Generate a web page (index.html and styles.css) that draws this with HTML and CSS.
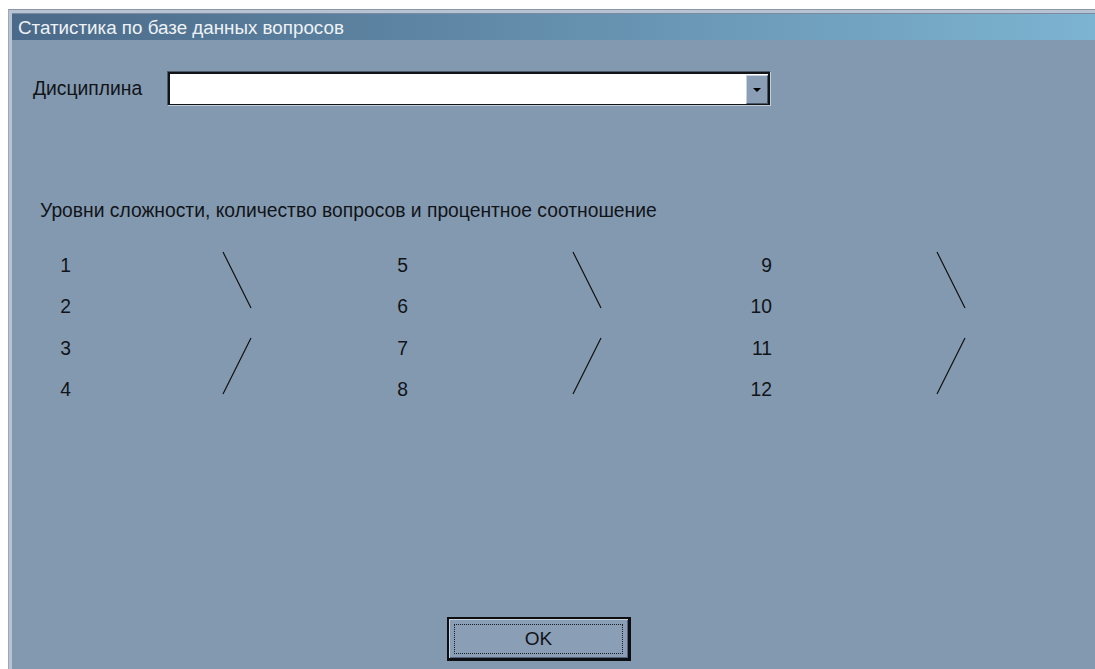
FILE: index.html
```html
<!DOCTYPE html>
<html lang="ru">
<head>
<meta charset="utf-8">
<title>Статистика по базе данных вопросов</title>
<link rel="stylesheet" href="styles.css">
</head>
<body>
<div class="window">
  <div class="frame">
    <div class="titlebar">Статистика по базе данных вопросов</div>
    <div class="client">
      <div class="field-row">
        <span class="label">Дисциплина</span>
        <div class="combo">
          <div class="combo-inner">
            <div class="combo-text"></div>
            <div class="combo-btn">
              <svg width="8" height="4" viewBox="0 0 8 4"><path d="M0 0h8L4 4z" fill="#000"/></svg>
            </div>
          </div>
        </div>
      </div>

      <div class="heading">Уровни сложности, количество вопросов и процентное соотношение</div>

      <div class="levels">
        <div class="group group-first">
          <div class="nums"><span>1</span><span>2</span><span>3</span><span>4</span></div>
          <svg class="brace" width="30" height="165" viewBox="0 0 30 165"><path d="M1 7L29 63M29 93L1 149" stroke="#111" stroke-width="1.2" fill="none"/></svg>
        </div>
        <div class="group">
          <div class="nums"><span>5</span><span>6</span><span>7</span><span>8</span></div>
          <svg class="brace" width="30" height="165" viewBox="0 0 30 165"><path d="M1 7L29 63M29 93L1 149" stroke="#111" stroke-width="1.2" fill="none"/></svg>
        </div>
        <div class="group">
          <div class="nums"><span>9</span><span>10</span><span>11</span><span>12</span></div>
          <svg class="brace" width="30" height="165" viewBox="0 0 30 165"><path d="M1 7L29 63M29 93L1 149" stroke="#111" stroke-width="1.2" fill="none"/></svg>
        </div>
      </div>

      <div class="actions">
        <button class="btn" type="button"><span class="focus">OK</span></button>
      </div>
    </div>
  </div>
</div>
</body>
</html>
```

FILE: styles.css
```css
html, body {
  margin: 0;
  padding: 0;
  background: #ffffff;
  overflow: hidden;
}

body {
  font-family: "Liberation Sans", Arial, sans-serif;
  font-size: 19.3px;
  color: #111418;
}

.window {
  margin: 9px 0 0 8px;
  border-top: 1px solid #8a97a9;
  border-left: 1px solid #9aa8ba;
  height: 660px;
  box-sizing: border-box;
  overflow: hidden;
}

.frame {
  border-top: 3px solid #b7c3d2;
  border-left: 3px solid #b7c3d2;
  height: 100%;
  box-sizing: border-box;
  background: #8399b0;
}

.titlebar {
  height: 27px;
  line-height: 27px;
  padding-left: 6px;
  color: #eef2f6;
  background: linear-gradient(to right, #4b6988, #7db4d1);
  font-size: 18.8px;
  border-top: 1px solid #7a8aa0;
  box-sizing: border-box;
}

.client {
  display: flex;
  flex-direction: column;
  padding-top: 31px;
}

.field-row {
  display: flex;
  align-items: center;
  height: 35px;
}

.label {
  width: 155px;
  padding-left: 21px;
  box-sizing: border-box;
}

.combo {
  width: 604px;
  height: 35px;
  box-sizing: border-box;
  border: 1px solid;
  border-color: #4e5a68 #c4ced9 #c4ced9 #4e5a68;
}

.combo-inner {
  display: flex;
  height: 100%;
  box-sizing: border-box;
  border: 2px solid #101418;
  border-bottom-width: 1px;
  background: #ffffff;
}

.combo-text {
  flex: 1;
}

.combo-btn {
  width: 22px;
  margin: 1px 0 0;
  display: flex;
  align-items: center;
  justify-content: center;
  background: #8a9fb6;
  box-sizing: border-box;
  border: 1px solid;
  border-color: #c7d2de #4a5664 #4a5664 #c7d2de;
}

.heading {
  margin-top: 94px;
  padding-left: 28px;
  line-height: 22px;
}

.levels {
  margin-top: 23px;
  padding-left: 26px;
  display: grid;
  grid-template-columns: 337px 364px auto;
  height: 165px;
}

.group {
  display: flex;
}

.nums {
  width: 33px;
  display: flex;
  flex-direction: column;
  text-align: right;
}

.nums span {
  height: 41.3px;
  line-height: 41.3px;
}

.brace {
  margin-left: 164px;
  display: block;
}

.group-first .brace {
  margin-left: 151px;
}

.actions {
  margin-top: 207px;
  padding-left: 435px;
  display: flex;
}

.btn {
  width: 184px;
  height: 44px;
  padding: 0;
  box-sizing: border-box;
  border: 2px solid #0c0e12;
  border-bottom-width: 3px;
  border-right-width: 3px;
  background: #8a9fb6;
  box-shadow: inset 1px 1px 0 #c7d2de, inset -1px -1px 0 #55637a;
  font-family: inherit;
  font-size: 19px;
  color: #111418;
  display: flex;
  align-items: stretch;
}

.focus {
  flex: 1;
  margin: 5px 5px 4px 5px;
  border: 1px dotted #1a1e24;
  display: flex;
  align-items: center;
  justify-content: center;
}
```
